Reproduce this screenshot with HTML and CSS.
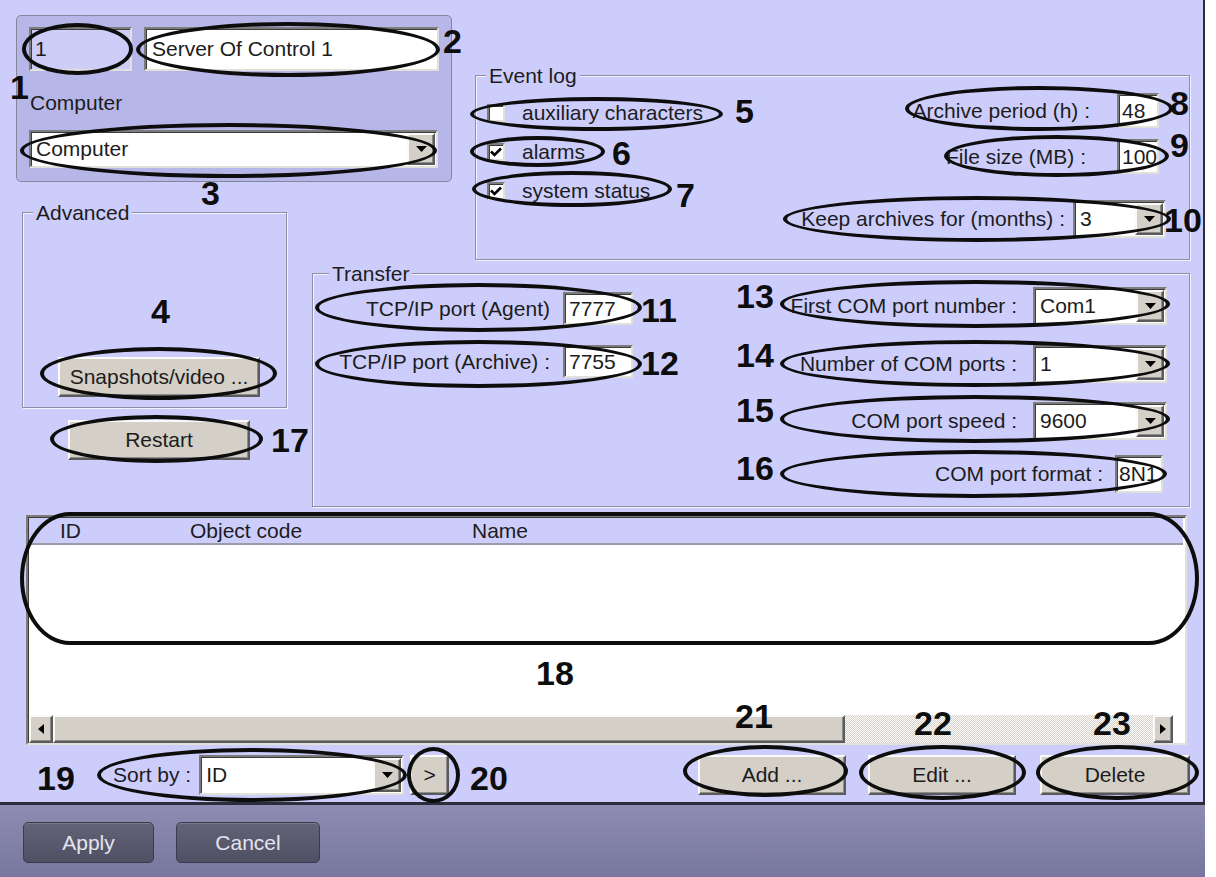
FILE: index.html
```html
<!DOCTYPE html>
<html lang="en">
<head>
    <meta charset="UTF-8">
    <meta name="viewport" content="width=device-width, initial-scale=1.0">
    <title>Server Of Control 1</title>
    <link rel="stylesheet" href="styles.css">
</head>
<body>
<div class="window">
    <div class="panel">
        <div class="form-grid">
            <!-- Object id / name / computer -->
            <div class="identity">
                <div class="identity-row">
                    <div class="field field-readonly id-field">1</div>
                    <div class="field name-field">Server Of Control 1</div>
                </div>
                <div class="identity-label">Computer</div>
                <div class="combo computer-combo">
                    <span class="combo-value">Computer</span>
                    <span class="button drop-btn"><svg width="11" height="6" viewBox="0 0 11 6"><path d="M0 0H11L5.5 6Z"/></svg></span>
                </div>
            </div>

            <!-- Event log -->
            <div class="group event-log">
                <div class="legend">Event log</div>
                <div class="event-body">
                    <div class="checks">
                        <div class="check-row"><span class="checkbox"></span><span>auxiliary characters</span></div>
                        <div class="check-row"><span class="checkbox"><svg width="12" height="10" viewBox="0 0 12 10"><path d="M1 4.5L4.5 8L11 1.5" fill="none" stroke="#000" stroke-width="2.6"/></svg></span><span>alarms</span></div>
                        <div class="check-row"><span class="checkbox"><svg width="12" height="10" viewBox="0 0 12 10"><path d="M1 4.5L4.5 8L11 1.5" fill="none" stroke="#000" stroke-width="2.6"/></svg></span><span>system status</span></div>
                    </div>
                    <div class="log-fields">
                        <div class="log-row archive-row">
                            <span>Archive period (h) :</span>
                            <div class="field small-field archive-field">48</div>
                        </div>
                        <div class="log-row size-row">
                            <span>File size (MB) :</span>
                            <div class="field small-field size-field">100</div>
                        </div>
                        <div class="log-row months-row">
                            <span>Keep archives for (months) :</span>
                            <div class="combo months-combo">
                                <span class="combo-value">3</span>
                                <span class="button drop-btn"><svg width="11" height="6" viewBox="0 0 11 6"><path d="M0 0H11L5.5 6Z"/></svg></span>
                            </div>
                        </div>
                    </div>
                </div>
            </div>

            <!-- Advanced + restart -->
            <div class="left-stack">
                <div class="group advanced">
                    <div class="legend">Advanced</div>
                    <div class="button snapshots-btn">Snapshots/video ...</div>
                </div>
                <div class="button restart-btn">Restart</div>
            </div>

            <!-- Transfer -->
            <div class="group transfer">
                <div class="legend">Transfer</div>
                <div class="transfer-body">
                    <div class="ports">
                        <div class="port-row">
                            <span class="port-label">TCP/IP port (Agent)</span>
                            <div class="field port-field">7777</div>
                        </div>
                        <div class="port-row">
                            <span class="port-label">TCP/IP port (Archive) :</span>
                            <div class="field port-field">7755</div>
                        </div>
                    </div>
                    <div class="com-fields">
                        <div class="com-row">
                            <span>First COM port number :</span>
                            <div class="combo com-combo">
                                <span class="combo-value">Com1</span>
                                <span class="button drop-btn"><svg width="11" height="6" viewBox="0 0 11 6"><path d="M0 0H11L5.5 6Z"/></svg></span>
                            </div>
                        </div>
                        <div class="com-row">
                            <span>Number of COM ports :</span>
                            <div class="combo com-combo">
                                <span class="combo-value">1</span>
                                <span class="button drop-btn"><svg width="11" height="6" viewBox="0 0 11 6"><path d="M0 0H11L5.5 6Z"/></svg></span>
                            </div>
                        </div>
                        <div class="com-row speed-row">
                            <span>COM port speed :</span>
                            <div class="combo com-combo">
                                <span class="combo-value">9600</span>
                                <span class="button drop-btn"><svg width="11" height="6" viewBox="0 0 11 6"><path d="M0 0H11L5.5 6Z"/></svg></span>
                            </div>
                        </div>
                        <div class="com-row format-row">
                            <span>COM port format :</span>
                            <div class="field format-field">8N1</div>
                        </div>
                    </div>
                </div>
            </div>
        </div>

        <!-- Objects list -->
        <div class="object-list">
            <div class="list-header">
                <span>ID</span>
                <span>Object code</span>
                <span>Name</span>
            </div>
            <div class="list-rows"></div>
            <div class="hscroll">
                <span class="button scroll-arrow"><svg width="6" height="10" viewBox="0 0 6 10"><path d="M6 0V10L0 5Z"/></svg></span>
                <span class="button scroll-thumb"></span>
                <span class="scroll-track"></span>
                <span class="button scroll-arrow right-arrow"><svg width="6" height="10" viewBox="0 0 6 10"><path d="M0 0V10L6 5Z"/></svg></span>
            </div>
        </div>

        <div class="bottom-row">
            <span class="sort-label">Sort by :</span>
            <div class="combo sort-combo">
                <span class="combo-value">ID</span>
                <span class="button drop-btn"><svg width="11" height="6" viewBox="0 0 11 6"><path d="M0 0H11L5.5 6Z"/></svg></span>
            </div>
            <div class="button next-btn">&gt;</div>
            <div class="button action-btn add-btn">Add ...</div>
            <div class="button action-btn edit-btn">Edit ...</div>
            <div class="button action-btn delete-btn">Delete</div>
        </div>
    </div>

    <div class="footer">
        <div class="footer-btn apply-btn">Apply</div>
        <div class="footer-btn cancel-btn">Cancel</div>
    </div>

    <!-- Callouts drawn over the dialog -->
    <div class="annotations" aria-hidden="true">
        <span class="oval o1"></span><span class="oval o2"></span><span class="oval o3"></span>
        <span class="oval o4"></span><span class="oval o5"></span><span class="oval o6"></span>
        <span class="oval o7"></span><span class="oval o8"></span><span class="oval o9"></span>
        <span class="oval o10"></span><span class="oval o11"></span><span class="oval o12"></span>
        <span class="oval o13"></span><span class="oval o14"></span><span class="oval o15"></span>
        <span class="oval o16"></span><span class="oval o17"></span><span class="oval o18"></span>
        <span class="oval o19"></span><span class="oval o20"></span><span class="oval o21"></span>
        <span class="oval o22"></span><span class="oval o23"></span>

        <span class="num n1">1</span><span class="num n2">2</span><span class="num n3">3</span>
        <span class="num n4">4</span><span class="num n5">5</span><span class="num n6">6</span>
        <span class="num n7">7</span><span class="num n8">8</span><span class="num n9">9</span>
        <span class="num n10">10</span><span class="num n11">11</span><span class="num n12">12</span>
        <span class="num n13">13</span><span class="num n14">14</span><span class="num n15">15</span>
        <span class="num n16">16</span><span class="num n17">17</span><span class="num n18">18</span>
        <span class="num n19">19</span><span class="num n20">20</span><span class="num n21">21</span>
        <span class="num n22">22</span><span class="num n23">23</span>
    </div>
</div>
</body>
</html>
```

FILE: styles.css
```css
/* General */
body {
    margin: 0;
    background-color: #fff;
    font-family: "Liberation Sans", Arial, sans-serif;
    font-size: 21px;
    color: #1c1c1c;
}

.window {
    position: relative;
    width: 1205px;
}

.panel {
    box-sizing: border-box;
    height: 805px;
    padding: 15px 13px 0 16px;
    background-color: #cdcdfc;
    border-right: 2px solid #2c2c3a;
    border-bottom: 3px solid #2c2c3a;
}

.form-grid {
    display: grid;
    grid-template-columns: 284px 163px 727px;
    grid-template-rows: 60px 107px 88px 237px;
}

/* Controls */
.field {
    box-sizing: border-box;
    display: flex;
    align-items: center;
    padding: 0 4px;
    background-color: #fff;
    border: 2px solid;
    border-color: #7c7c7c #e2e0da #e2e0da #7c7c7c;
    box-shadow: inset 1px 1px 0 #3c3c3c;
    white-space: nowrap;
    overflow: hidden;
}

.field-readonly {
    background-color: #cdcdf8;
}

.combo {
    box-sizing: border-box;
    display: flex;
    background-color: #fff;
    border: 2px solid;
    border-color: #7c7c7c #e2e0da #e2e0da #7c7c7c;
    box-shadow: inset 1px 1px 0 #3c3c3c;
}

.combo-value {
    flex: 1;
    display: flex;
    align-items: center;
    padding-left: 5px;
    white-space: nowrap;
}

.button {
    box-sizing: border-box;
    display: flex;
    align-items: center;
    justify-content: center;
    background-color: #d4d0c8;
    border: 2px solid;
    border-color: #fafafa #5a5a5a #5a5a5a #fafafa;
    box-shadow: inset -1px -1px 0 #8c8c8c;
    white-space: nowrap;
}

.drop-btn {
    width: 28px;
    margin: 1px;
}

/* Group boxes */
.group {
    box-sizing: border-box;
    border: 1px solid #8e8ea4;
    box-shadow: inset 1px 1px 0 #f2f2ff, 1px 1px 0 #f2f2ff;
}

.legend {
    width: fit-content;
    margin: -11px 0 0 10px;
    padding: 0 3px;
    line-height: 22px;
    background-color: #cdcdfc;
}

/* Identity */
.identity {
    grid-column: 1 / 3;
    grid-row: 1 / 3;
    box-sizing: border-box;
    width: 436px;
    height: 167px;
    padding: 11px 0 0 12px;
    background-color: #b6b6e8;
    border: 1px solid #85859c;
    border-radius: 5px;
}

.identity-row {
    display: flex;
    gap: 12px;
}

.id-field {
    width: 103px;
    height: 44px;
}

.name-field {
    width: 295px;
    height: 44px;
    padding-left: 6px;
}

.identity-label {
    margin-top: 20px;
    line-height: 24px;
    padding-left: 1px;
}

.computer-combo {
    width: 409px;
    height: 38px;
    margin-top: 15px;
}

/* Event log */
.event-log {
    grid-column: 3;
    grid-row: 2 / 4;
    height: 185px;
    margin-left: 12px;
}

.event-body {
    display: flex;
    justify-content: space-between;
    padding: 6px 23px 0 11px;
}

.check-row {
    display: flex;
    align-items: center;
    gap: 17px;
    height: 39px;
}

.checkbox {
    box-sizing: border-box;
    display: flex;
    align-items: center;
    justify-content: center;
    width: 18px;
    height: 18px;
    background-color: #fff;
    border: 2px solid;
    border-color: #7c7c7c #e2e0da #e2e0da #7c7c7c;
    box-shadow: inset 1px 1px 0 #3c3c3c;
}

.log-fields {
    display: flex;
    flex-direction: column;
    align-items: flex-end;
}

.log-row {
    display: flex;
    align-items: center;
}

.archive-row {
    height: 35px;
}

.size-row {
    height: 35px;
    margin-top: 11px;
}

.months-row {
    height: 38px;
    margin-top: 26px;
}

.small-field {
    width: 42px;
    height: 35px;
    margin-right: 7px;
    padding-left: 3px;
}

.archive-field {
    margin-left: 27px;
}

.size-field {
    margin-left: 31px;
}

.months-combo {
    width: 93px;
    height: 38px;
    margin-left: 8px;
}

/* Advanced */
.left-stack {
    grid-column: 1;
    grid-row: 3 / 5;
    padding: 30px 0 0 6px;
}

.advanced {
    display: flex;
    flex-direction: column;
    width: 265px;
    height: 196px;
}

.snapshots-btn {
    width: 202px;
    height: 40px;
    margin: auto 0 10px 35px;
}

.restart-btn {
    width: 182px;
    height: 40px;
    margin: 12px 0 0 46px;
}

/* Transfer */
.transfer {
    grid-column: 2 / 4;
    grid-row: 4;
    height: 234px;
    margin: 3px 0 0 12px;
}

.transfer .legend {
    margin-left: 16px;
}

.transfer-body {
    display: flex;
    justify-content: space-between;
    padding: 2px 22px 0 16px;
}

.port-row {
    display: flex;
    align-items: center;
    height: 33px;
    margin-top: 5px;
}

.port-row + .port-row {
    margin-top: 20px;
}

.port-label {
    width: 221px;
    text-align: right;
}

.port-field {
    width: 70px;
    height: 33px;
    margin-left: 13px;
}

.com-fields {
    display: flex;
    flex-direction: column;
    align-items: flex-end;
}

.com-row {
    display: flex;
    align-items: center;
    height: 38px;
}

.com-row + .com-row {
    margin-top: 20px;
}

.com-row.speed-row {
    margin-top: 19px;
}

.com-row.format-row {
    margin-top: 15px;
}

.com-combo {
    width: 134px;
    height: 38px;
    margin-left: 16px;
}

.format-field {
    width: 48px;
    height: 38px;
    margin: 0 4px 0 12px;
    padding-left: 2px;
}

/* Objects list */
.object-list {
    box-sizing: border-box;
    display: flex;
    flex-direction: column;
    width: 1161px;
    height: 230px;
    margin: 8px 0 0 10px;
    background-color: #fff;
    border: 2px solid;
    border-color: #7c7c7c #e2e0da #e2e0da #7c7c7c;
    box-shadow: inset 1px 1px 0 #3c3c3c;
}

.list-header {
    display: grid;
    grid-template-columns: 130px 282px 1fr;
    align-items: center;
    height: 25px;
    margin: 1px 2px 0 1px;
    background-color: #cdcdfc;
    border-bottom: 2px solid #9a9aa8;
}

.list-header span {
    padding-left: 31px;
}

.list-rows {
    flex: 1;
}

.hscroll {
    display: flex;
    width: 1144px;
    height: 28px;
    margin-left: 1px;
}

.scroll-arrow {
    width: 24px;
}

.right-arrow {
    width: 20px;
}

.scroll-thumb {
    width: 792px;
}

.scroll-track {
    flex: 1;
    background: repeating-conic-gradient(#d4d0c8 0 25%, #fff 0 50%) 0 0 / 2px 2px;
}

/* Bottom row */
.bottom-row {
    display: flex;
    align-items: center;
    height: 40px;
    margin-top: 10px;
}

.sort-label {
    margin-left: 97px;
}

.sort-combo {
    width: 205px;
    height: 40px;
    margin-left: 8px;
}

.next-btn {
    width: 39px;
    height: 40px;
    margin-left: 6px;
}

.action-btn {
    height: 40px;
}

.add-btn {
    width: 148px;
    margin-left: auto;
}

.edit-btn {
    width: 148px;
    margin-left: 22px;
}

.delete-btn {
    width: 150px;
    margin-left: 24px;
}

/* Footer */
.footer {
    box-sizing: border-box;
    display: flex;
    gap: 22px;
    height: 72px;
    padding: 17px 0 0 23px;
    background: linear-gradient(#8e8cb2, #77769e);
}

.footer-btn {
    box-sizing: border-box;
    display: flex;
    align-items: center;
    justify-content: center;
    height: 41px;
    color: #e4e4ee;
    background: linear-gradient(#636378, #505064);
    border: 1px solid #3b3b4e;
    border-radius: 5px;
    box-shadow: inset 0 1px 0 rgba(255, 255, 255, 0.15);
}

.apply-btn {
    width: 131px;
}

.cancel-btn {
    width: 144px;
}

/* Callouts */
.oval {
    position: absolute;
    box-sizing: border-box;
    border: 4px solid #0d0d0d;
    border-radius: 50%;
}

.num {
    position: absolute;
    font-size: 34px;
    line-height: 34px;
    font-weight: bold;
    color: #0d0d0d;
}

.o1 { left: 22px; top: 23px; width: 111px; height: 52px; }
.o2 { left: 136px; top: 22px; width: 304px; height: 55px; }
.o3 { left: 20px; top: 123px; width: 417px; height: 55px; }
.o4 { left: 40px; top: 347px; width: 237px; height: 53px; }
.o5 { left: 470px; top: 97px; width: 253px; height: 34px; }
.o6 { left: 470px; top: 136px; width: 135px; height: 31px; }
.o7 { left: 472px; top: 171px; width: 200px; height: 36px; }
.o8 { left: 905px; top: 86px; width: 268px; height: 45px; }
.o9 { left: 944px; top: 135px; width: 225px; height: 42px; }
.o10 { left: 783px; top: 196px; width: 388px; height: 46px; }
.o11 { left: 315px; top: 283px; width: 327px; height: 49px; }
.o12 { left: 315px; top: 340px; width: 327px; height: 48px; }
.o13 { left: 780px; top: 280px; width: 390px; height: 48px; }
.o14 { left: 780px; top: 340px; width: 390px; height: 47px; }
.o15 { left: 780px; top: 395px; width: 390px; height: 48px; }
.o16 { left: 780px; top: 450px; width: 387px; height: 48px; }
.o17 { left: 50px; top: 415px; width: 213px; height: 48px; }
.o18 { left: 20px; top: 512px; width: 1179px; height: 133px; border-radius: 50px / 50%; }
.o19 { left: 97px; top: 748px; width: 310px; height: 54px; }
.o20 { left: 407px; top: 747px; width: 53px; height: 56px; }
.o21 { left: 683px; top: 745px; width: 165px; height: 52px; }
.o22 { left: 859px; top: 745px; width: 167px; height: 55px; }
.o23 { left: 1036px; top: 745px; width: 163px; height: 55px; }

.n1 { left: 10px; top: 70px; }
.n2 { left: 443px; top: 24px; }
.n3 { left: 201px; top: 176px; }
.n4 { left: 151px; top: 294px; }
.n5 { left: 735px; top: 94px; }
.n6 { left: 612px; top: 136px; }
.n7 { left: 676px; top: 178px; }
.n8 { left: 1170px; top: 86px; }
.n9 { left: 1170px; top: 128px; }
.n10 { left: 1164px; top: 203px; }
.n11 { left: 641px; top: 293px; }
.n12 { left: 641px; top: 346px; }
.n13 { left: 736px; top: 279px; }
.n14 { left: 736px; top: 338px; }
.n15 { left: 736px; top: 393px; }
.n16 { left: 736px; top: 451px; }
.n17 { left: 271px; top: 423px; }
.n18 { left: 536px; top: 656px; }
.n19 { left: 37px; top: 761px; }
.n20 { left: 470px; top: 761px; }
.n21 { left: 735px; top: 699px; }
.n22 { left: 914px; top: 706px; }
.n23 { left: 1093px; top: 706px; }
```
